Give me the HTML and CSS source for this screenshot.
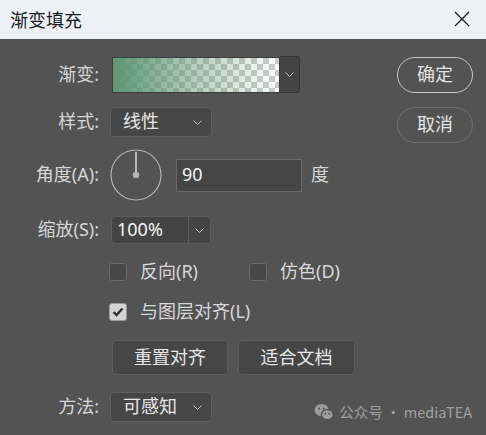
FILE: index.html
```html
<!DOCTYPE html>
<html lang="zh">
<head>
<meta charset="utf-8">
<title>渐变填充</title>
<link rel="stylesheet" href="styles.css">
</head>
<body>
<div class="dialog">
  <div class="titlebar">
    <span class="title">渐变填充</span>
    <svg class="close" width="16" height="16" viewBox="0 0 16 16"><path d="M1 1 L15 15 M15 1 L1 15" stroke="#1b1b1b" stroke-width="1.3" fill="none"/></svg>
  </div>
  <div class="main">
    <div class="form">
      <div class="row r-grad">
        <span class="lbl">渐变:</span>
        <div class="grad">
          <div class="swatch"><div class="swatch-fill"></div></div>
          <div class="grad-btn"><svg class="chev" width="9" height="5" viewBox="0 0 9 5"><path d="M0.5 0.5 L4.5 4.5 L8.5 0.5" stroke="#c4c4c4" stroke-width="1" fill="none"/></svg></div>
        </div>
      </div>
      <div class="row r-style">
        <span class="lbl">样式:</span>
        <div class="select">
          <span class="sel-text">线性</span>
          <svg class="chev" width="9" height="5" viewBox="0 0 9 5"><path d="M0.5 0.5 L4.5 4.5 L8.5 0.5" stroke="#c4c4c4" stroke-width="1" fill="none"/></svg>
        </div>
      </div>
      <div class="row r-angle">
        <span class="lbl">角度(A):</span>
        <svg class="dial" width="52" height="54" viewBox="0 0 52 54">
          <circle cx="26" cy="27" r="25" stroke="#b4b4b4" stroke-width="1.2" fill="none"/>
          <line x1="26" y1="27" x2="26" y2="4" stroke="#b4b4b4" stroke-width="2"/>
          <circle cx="26" cy="27" r="3.2" fill="#b4b4b4"/>
        </svg>
        <div class="input"><span>90</span></div>
        <span class="unit">度</span>
      </div>
      <div class="row r-scale">
        <span class="lbl">缩放(S):</span>
        <div class="combo">
          <span class="combo-text">100%</span>
          <span class="combo-btn"><svg class="chev" width="9" height="5" viewBox="0 0 9 5"><path d="M0.5 0.5 L4.5 4.5 L8.5 0.5" stroke="#c4c4c4" stroke-width="1" fill="none"/></svg></span>
        </div>
      </div>
      <div class="row r-check1">
        <div class="check-item first"><span class="box"></span><span class="ctext">反向(R)</span></div>
        <div class="check-item"><span class="box"></span><span class="ctext">仿色(D)</span></div>
      </div>
      <div class="row r-check2">
        <div class="check-item"><span class="box checked"><svg width="12" height="10" viewBox="0 0 12 10"><path d="M1.5 5 L4.5 8 L10.5 1.5" stroke="#2e2e2e" stroke-width="2.4" fill="none"/></svg></span><span class="ctext">与图层对齐(L)</span></div>
      </div>
      <div class="row r-btns">
        <button class="btn">重置对齐</button>
        <button class="btn">适合文档</button>
      </div>
      <div class="row r-method">
        <span class="lbl">方法:</span>
        <div class="select">
          <span class="sel-text">可感知</span>
          <svg class="chev" width="9" height="5" viewBox="0 0 9 5"><path d="M0.5 0.5 L4.5 4.5 L8.5 0.5" stroke="#c4c4c4" stroke-width="1" fill="none"/></svg>
        </div>
      </div>
    </div>
    <div class="side">
      <button class="pill ok">确定</button>
      <button class="pill cancel">取消</button>
    </div>
  </div>
  <div class="watermark">
    <svg class="wechat" width="20" height="18" viewBox="0 0 21 19">
      <ellipse cx="8" cy="7.5" rx="7.5" ry="6.5" fill="#9c9c9c"/>
      <circle cx="5.3" cy="5.8" r="1" fill="#535353"/>
      <circle cx="10.3" cy="5.8" r="1" fill="#535353"/>
      <ellipse cx="14" cy="12.3" rx="6.3" ry="5.4" fill="#9c9c9c" stroke="#535353" stroke-width="1.4"/>
      <circle cx="12" cy="11.3" r="0.9" fill="#535353"/>
      <circle cx="16" cy="11.3" r="0.9" fill="#535353"/>
    </svg>
    <span>公众号 · mediaTEA</span>
  </div>
</div>
</body>
</html>
```

FILE: styles.css
```css
* { box-sizing: border-box; }
html, body {
  margin: 0;
  padding: 0;
  width: 486px;
  height: 435px;
  overflow: hidden;
}
body {
  font-family: "Noto Sans", "Noto Sans CJK SC", sans-serif;
  font-size: 18px;
  color: #d8d8d8;
  background: #535353;
}
.dialog {
  position: relative;
  width: 486px;
  height: 435px;
  background: #535353;
}
.titlebar {
  height: 39px;
  background: #eef2f7;
  display: flex;
  align-items: center;
  justify-content: space-between;
  padding: 0 16px 0 10px;
}
.title {
  font-family: "Noto Sans CJK SC", sans-serif;
  font-size: 18px;
  color: #1b1b1b;
  line-height: 1;
  margin-top: -2px;
}
.close { display: block; margin-top: -2px; }

.main {
  display: flex;
  padding-top: 17px;
}
.form {
  width: 397px;
  display: flex;
  flex-direction: column;
}
.row {
  display: flex;
  align-items: center;
  line-height: 1.2;
}
.lbl {
  width: 100px;
  text-align: right;
  padding-right: 1px;
  margin-right: 10px;
  color: #d6d6d6;
}
.r-grad { height: 37px; }
.r-style { height: 30px; margin-top: 14px; }
.r-angle { height: 52px; margin-top: 12px; }
.r-scale { height: 28px; margin-top: 15px; }
.r-check1 { height: 20px; margin-top: 18px; padding-left: 109px; }
.r-check2 { height: 20px; margin-top: 20px; padding-left: 109px; }
.r-btns { height: 35px; margin-top: 18px; padding-left: 112px; gap: 10px; }
.r-method { height: 30px; margin-top: 17px; }

.chev { display: block; }

/* gradient */
.grad {
  display: flex;
  align-items: center;
  margin-left: 2px;
}
.swatch {
  width: 168px;
  height: 36px;
  border: 1px solid #3d3d3d;
  background-color: #ffffff;
  background-image:
    linear-gradient(45deg, #cccccc 25%, transparent 25%, transparent 75%, #cccccc 75%),
    linear-gradient(45deg, #cccccc 25%, transparent 25%, transparent 75%, #cccccc 75%);
  background-size: 12px 12px;
  background-position: 0 0, 6px 6px;
}
.swatch-fill {
  width: 100%;
  height: 100%;
  background: linear-gradient(to right, rgba(92,150,114,1) 0%, rgba(92,150,114,0.5) 45%, rgba(92,150,114,0) 100%);
}
.grad-btn {
  width: 20px;
  height: 37px;
  background: #444444;
  border: 1px solid #363636;
  border-left: none;
  border-radius: 0 3px 3px 0;
  display: flex;
  align-items: center;
  justify-content: center;
}

/* select */
.select {
  width: 102px;
  height: 30px;
  background: #464646;
  border: 1px solid #5e5e5e;
  border-radius: 4px;
  display: flex;
  align-items: center;
  justify-content: space-between;
  padding: 0 9px 0 12px;
  color: #e6e6e6;
}

/* angle */
.dial { display: block; }
.input {
  width: 126px;
  height: 33px;
  margin-left: 14px;
  background: #454545;
  border: 1px solid #6a6a6a;
  display: flex;
  align-items: center;
  padding-left: 5px;
  color: #f4f4f4;
}
.unit { margin-left: 9px; color: #d6d6d6; }

/* combo */
.combo {
  width: 100px;
  height: 28px;
  margin-left: 1px;
  background: #444444;
  border: 1px solid #5c5c5c;
  border-radius: 4px;
  display: flex;
  align-items: stretch;
}
.combo-text {
  flex: 1;
  display: flex;
  align-items: center;
  padding-left: 5px;
  color: #f4f4f4;
  border-right: 1px solid #5c5c5c;
}
.combo-btn {
  width: 21px;
  display: flex;
  align-items: center;
  justify-content: center;
}

/* checkboxes */
.check-item {
  display: flex;
  align-items: center;
}
.check-item.first { width: 140px; }
.box {
  width: 18px;
  height: 18px;
  border: 1px solid #6b6b6b;
  border-radius: 3px;
  background: #474747;
  display: flex;
  align-items: center;
  justify-content: center;
}
.box.checked {
  background: #d4d4d4;
  border-color: #9a9a9a;
}
.ctext {
  margin-left: 13px;
  color: #d8d8d8;
}

/* buttons */
.btn {
  font: inherit;
  line-height: 1.2;
  width: 116px;
  height: 35px;
  padding: 0;
  background: #464646;
  border: 1px solid #5c5c5c;
  border-radius: 4px;
  color: #e6e6e6;
}
.btn + .btn { width: 117px; }

.side {
  display: flex;
  flex-direction: column;
  gap: 14px;
  padding-top: 1px;
}
.pill {
  font: inherit;
  line-height: 1.2;
  width: 76px;
  height: 36px;
  padding: 0;
  border-radius: 18px;
  background: transparent;
  color: #e4e4e4;
}
.pill.ok { border: 1.5px solid #c8c8c8; }
.pill.cancel { border: 1.5px solid #707070; }

.watermark {
  position: absolute;
  right: 14px;
  bottom: 14px;
  display: flex;
  align-items: center;
  gap: 5px;
  font-family: "Noto Sans CJK SC", sans-serif;
  font-size: 14.5px;
  color: #a0a0a0;
  line-height: 1;
}
.wechat { display: block; }
```
